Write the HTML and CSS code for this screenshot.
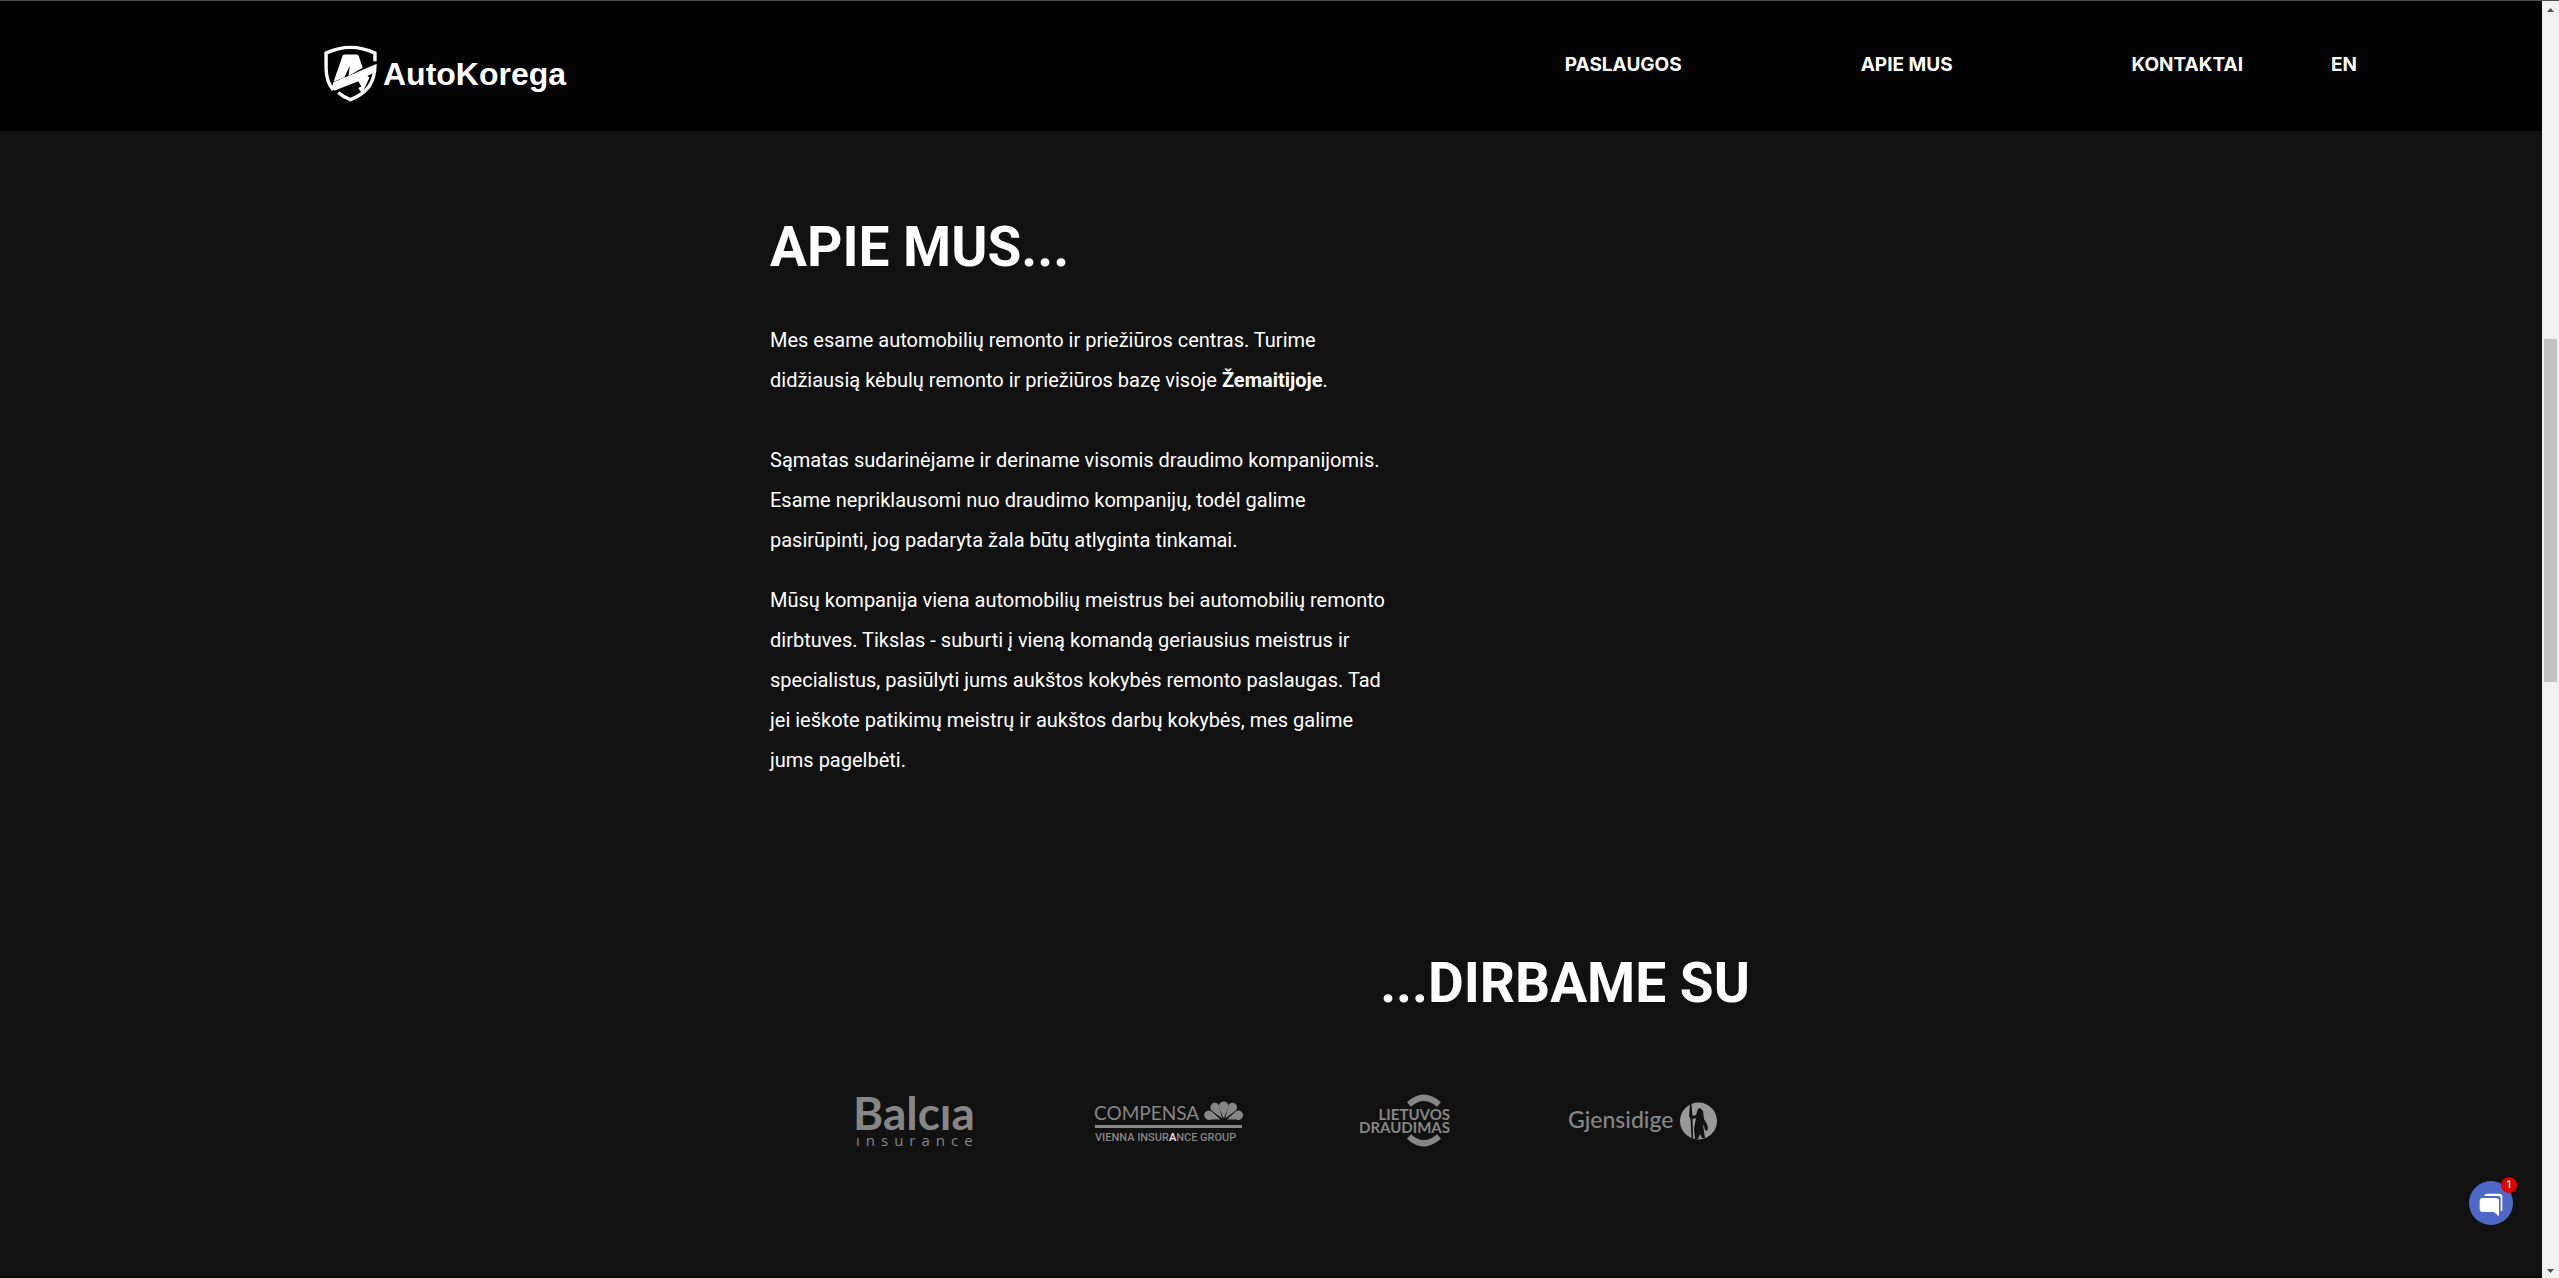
FILE: index.html
```html
<!DOCTYPE html>
<html lang="lt">
<head>
<meta charset="utf-8">
<title>AutoKorega</title>
<link rel="stylesheet" href="styles.css">
</head>
<body>
<div class="page">
  <header class="header">
    <a class="brand" href="#">
      <svg class="brand-mark" viewBox="0 0 156 168" aria-hidden="true">
        <path d="M150 48V24Q78-10 6 24V66C6 96 15 118 27 132" fill="none" stroke="#fff" stroke-width="10"/>
        <path d="M150 60C150 108 130 140 78 161Q56 153 42 140" fill="none" stroke="#fff" stroke-width="10"/>
        <path d="M55 31Q57 28 62 28H96Q100 28 102 32L114 67 72 91 76 61 60 96 28 108Z" fill="#fff"/>
        <path d="M28 110L156 55 147 81 128 91 134 96 112 143 101 127 110 122 101 107 30 135 22 126Z" fill="#fff"/>
      </svg>
      <span class="brand-name">AutoKorega</span>
    </a>
    <nav class="nav">
      <a href="#paslaugos">PASLAUGOS</a>
      <a href="#apie">APIE MUS</a>
      <a href="#kontaktai">KONTAKTAI</a>
      <a class="lang" href="#en">EN</a>
    </nav>
  </header>

  <main class="content">
    <section class="about" id="apie">
      <h1 class="title">APIE MUS...</h1>
      <div class="copy">
        <p>Mes esame automobilių remonto ir priežiūros centras. Turime didžiausią kėbulų remonto ir priežiūros bazę visoje <strong>Žemaitijoje</strong>.<br><br>Sąmatas sudarinėjame ir deriname visomis draudimo kompanijomis. Esame nepriklausomi nuo draudimo kompanijų, todėl galime pasirūpinti, jog padaryta žala būtų atlyginta tinkamai.</p>
        <p>Mūsų kompanija viena automobilių meistrus bei automobilių remonto dirbtuves. Tikslas - suburti į vieną komandą geriausius meistrus ir specialistus, pasiūlyti jums aukštos kokybės remonto paslaugas. Tad jei ieškote patikimų meistrų ir aukštos darbų kokybės, mes galime jums pagelbėti.</p>
      </div>
    </section>

    <section class="partners">
      <h2 class="title title-right">...DIRBAME SU</h2>
      <div class="logos">
        <svg width="120" height="52" viewBox="0 0 120 52" role="img" aria-label="Balcia insurance">
          <text class="balcia" x="-3" y="35">Balcıa</text>
          <text class="balcia-sub" x="0" y="51">ınsurance</text>
        </svg>
        <svg width="148" height="42" viewBox="0 0 148 42" role="img" aria-label="Compensa Vienna Insurance Group">
          <text class="compensa" x="-1" y="20">COMPENSA</text>
          <g class="fill" transform="translate(10 1) scale(.92)">
            <path d="M129 19L123.500 6A5.500 5.500 0 1 1 134.500 6Z"/>
            <path d="M127.500 19L116.500 11A5 5 0 1 1 123.500 4Z"/>
            <path d="M130.500 19L134.500 4A5 5 0 1 1 141.500 11Z"/>
            <path d="M125.500 20H115A5 5 0 1 1 116 11.500Z"/>
            <path d="M132.500 20H143A5 5 0 1 0 142 11.500Z"/>
          </g>
          <rect class="fill" x="0" y="25" width="147" height="3"/>
          <text class="compensa-sub" x="0" y="41">VIENNA INSUR<tspan class="bright">A</tspan>NCE GROUP</text>
        </svg>
        <svg width="88" height="52" viewBox="0 0 88 52" role="img" aria-label="Lietuvos draudimas">
          <path class="stroke" d="M47 9.500Q61.500-4 77 9.500M47 41.500Q61.500 55 77 41.500"/>
          <text class="lietuvos" x="88" y="25" text-anchor="end">LIETUVOS</text>
          <text class="lietuvos" x="88" y="38" text-anchor="end">DRAUDIMAS</text>
        </svg>
        <svg width="148" height="38" viewBox="0 0 148 38" role="img" aria-label="Gjensidige">
          <text class="gjensidige" x="-1" y="26">Gjensidige</text>
          <circle class="light" cx="129.500" cy="19" r="18.500"/>
          <path class="ink" d="M121 2H122.500L123.500 14 127 13 129 7 131 6 134 9 135 17 138 22 139 26 138 29 136 28 135 24 134 23 136 36H133L131 32 129 37H126L125 27 127 16 123.500 17 124 36 122.500 36 121.500 17 120 14Z"/>
        </svg>
      </div>
    </section>
  </main>

  <button class="chat" type="button" aria-label="Chat">
    <svg width="24" height="24" viewBox="0 0 72 72" aria-hidden="true">
      <path d="M16 9Q17 2 24 2H62Q70 2 70 10V54H65V15Q65 9 59 9Z" fill="#fff"/>
      <path d="M11 15H50Q60 15 60 25V70L45 57H11Q2 57 2 48V24Q2 15 11 15Z" fill="#fff"/>
    </svg>
    <span class="chat-badge">1</span>
  </button>
</div>

<div class="scrollbar" aria-hidden="true">
  <svg width="7" height="4" viewBox="0 0 7 4"><path d="M0 4H7L3.500 0Z" fill="#505050"/></svg>
  <div class="track"><div class="thumb"></div></div>
  <svg width="7" height="4" viewBox="0 0 7 4"><path d="M0 0H7L3.500 4Z" fill="#505050"/></svg>
</div>
</body>
</html>
```
FILE: styles.css
```css
* {
  box-sizing: border-box;
}

body {
  margin: 0;
  min-height: 100vh;
  display: grid;
  grid-template-columns: 1fr 17px;
  border-top: 1px solid #505050;
  background: #111;
  color: #fff;
  font-family: Roboto, sans-serif;
}

.page {
  min-width: 0;
  border-bottom: 1px solid #000;
}

.header {
  display: flex;
  justify-content: space-between;
  align-items: flex-start;
  height: 130px;
  padding: 44px 185px 0 324px;
  background: #020202;
}

a {
  color: inherit;
  text-decoration: none;
}

.brand {
  display: flex;
  gap: 6px;
}

.brand-mark {
  width: 53px;
  height: 57px;
}

.brand-name {
  font: bold 32px/58px "Liberation Sans", Arial, sans-serif;
}

.nav {
  display: flex;
  gap: 179px;
  font: 700 19px/40px Inter, sans-serif;
}

.lang {
  margin-left: -91px;
}

.content {
  width: 100%;
  max-width: 1002px;
  margin: 0 auto;
  padding-top: 84px;
}

.title {
  margin: 0;
  font-size: 55px;
  font-weight: 700;
  line-height: 64px;
}

.copy {
  max-width: 620px;
  margin-top: 41px;
  font-size: 20px;
  line-height: 40px;
}

.copy p {
  margin: 0 0 20px;
}

.partners {
  margin-top: 171px;
}

.title-right {
  padding-right: 22px;
  text-align: right;
}

.logos {
  display: flex;
  justify-content: space-between;
  align-items: center;
  margin-top: 80px;
  padding: 0 55px 0 86px;
}

.logos svg {
  overflow: visible;
}

.logos text,
.fill {
  fill: #868686;
}

.stroke {
  fill: none;
  stroke: #868686;
  stroke-width: 6px;
}

.light {
  fill: #999;
}

.ink {
  fill: #111;
}

.logos .bright {
  fill: #eee;
}

.balcia {
  font: 700 46px Lato, sans-serif;
}

.balcia-sub {
  font: 400 15px "Open Sans", sans-serif;
  letter-spacing: 6px;
}

.compensa {
  font: 400 19px Lato, sans-serif;
}

.compensa-sub {
  font: 500 11px Roboto, sans-serif;
}

.lietuvos {
  font: 700 15px Lato, sans-serif;
}

.gjensidige {
  font: 500 23px Lato, sans-serif;
}

.chat {
  position: fixed;
  right: 46px;
  bottom: 53px;
  display: grid;
  place-items: center;
  width: 44px;
  height: 44px;
  padding: 4px 0 0;
  border: 0;
  border-radius: 50%;
  background: #4f68c8;
}

.chat-badge {
  position: absolute;
  top: -4px;
  right: -4px;
  width: 16px;
  height: 16px;
  border-radius: 50%;
  background: #e00000;
  color: #fff;
  font: 700 10px/16px Roboto, sans-serif;
  text-align: center;
}

.scrollbar {
  display: flex;
  flex-direction: column;
  align-items: center;
  padding: 7px 0 5px;
  background: #f1f1f1;
}

.track {
  flex: 1;
  align-self: stretch;
  padding: 0 2px;
}

.thumb {
  height: 343px;
  margin-top: 327px;
  background: #c1c1c1;
}
```
